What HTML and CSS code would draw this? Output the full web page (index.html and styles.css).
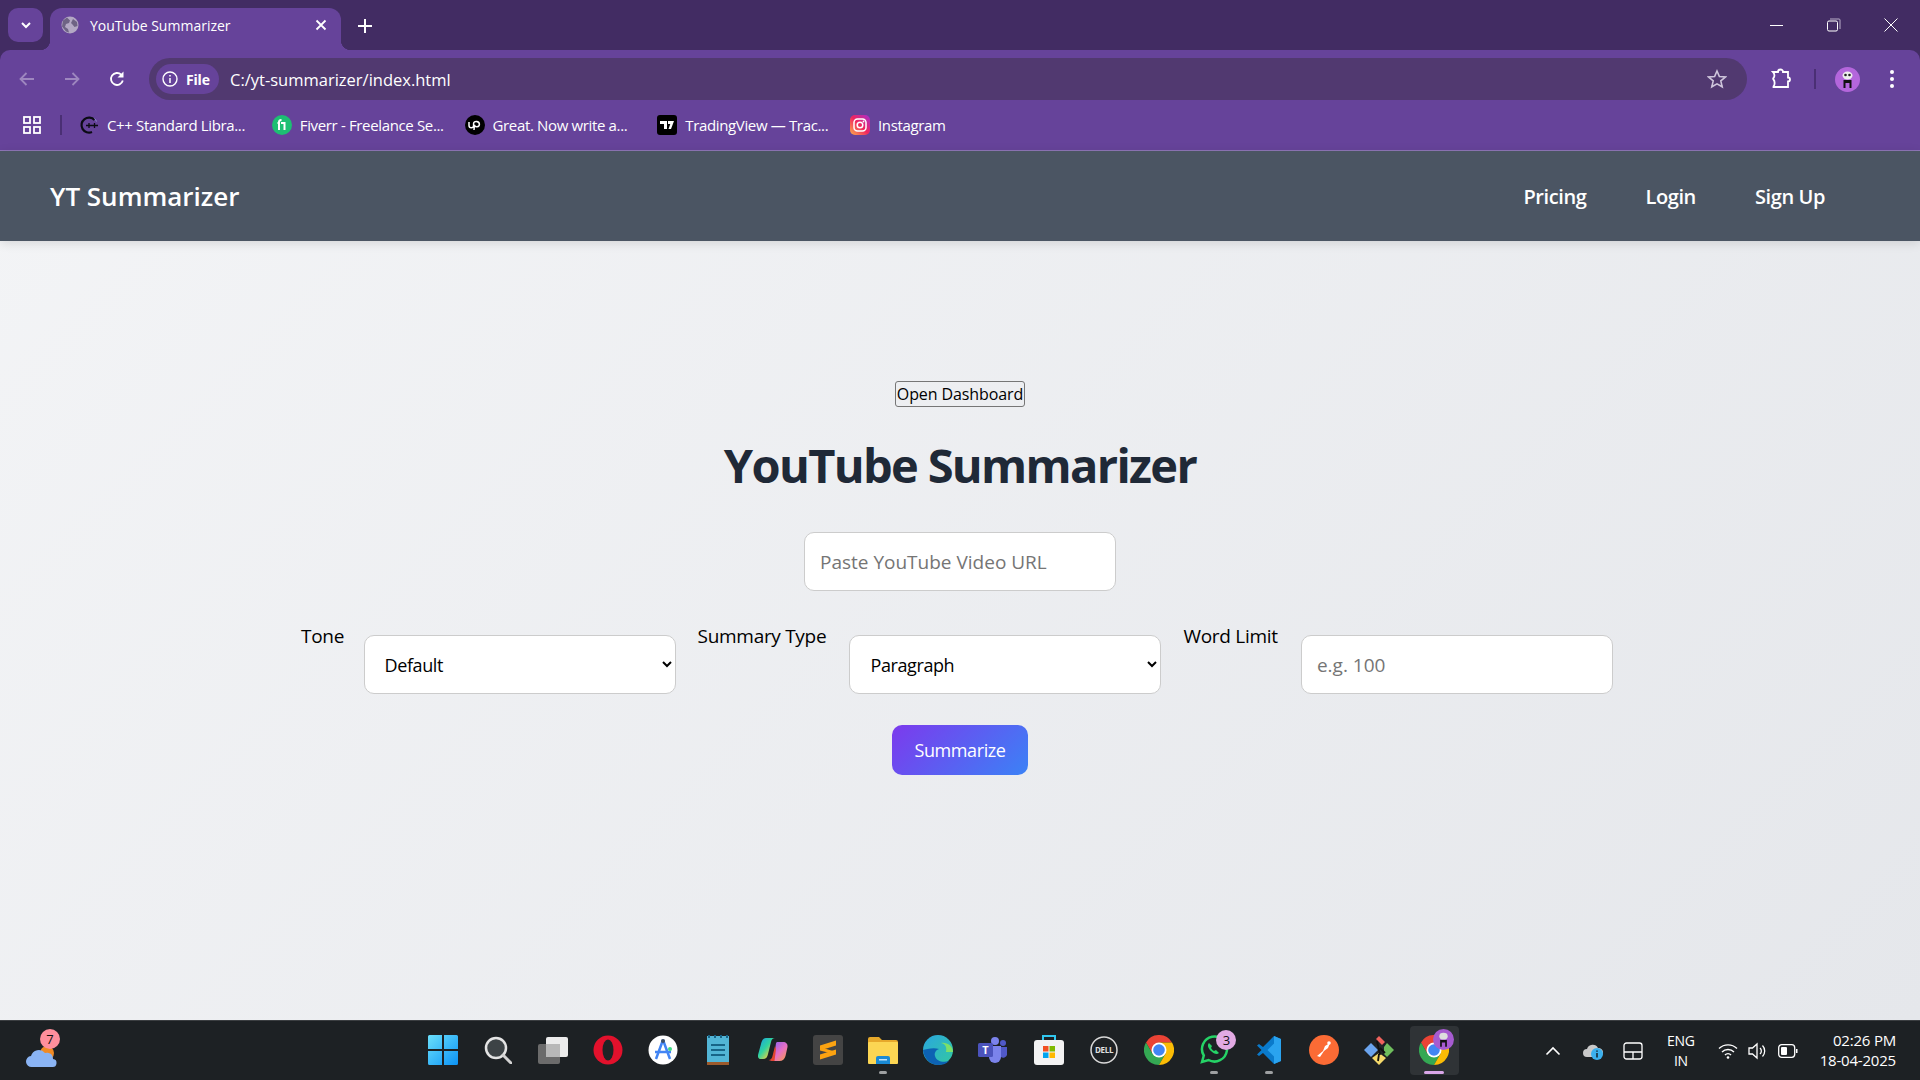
FILE: index.html
```html
<!DOCTYPE html>
<html lang="en">
<head>
<meta charset="utf-8">
<title>YouTube Summarizer</title>
<link rel="stylesheet" href="styles.css">
</head>
<body>
<div class="screen">
  <header class="chrome">
    <div class="tabstrip">
      <button class="tab-search"><svg width="14" height="14" viewBox="0 0 14 14"><path d="M3 5l4 4 4-4" fill="none" stroke="#fff" stroke-width="2"/></svg></button>
      <div class="tab">
        <svg class="favicon" width="18" height="18" viewBox="0 0 18 18"><circle cx="9" cy="9" r="8.500" fill="#b3a8c4"/><path d="M6 1.500l3 3-1 2.500-3 1-1 3 3 2 1 3.500-3-1-4-5 1-6zM12 3l4 3 .5 4-3 1-2-2.500-1.500-1.500z" fill="#6e6384"/></svg>
        <span class="tab-title">YouTube Summarizer</span>
        <svg class="tab-close" width="12" height="12" viewBox="0 0 12 12"><path d="M1.500 1.500l9 9M10.500 1.500l-9 9" stroke="#fff" stroke-width="1.800"/></svg>
      </div>
      <svg class="new-tab" width="14" height="14" viewBox="0 0 14 14"><path d="M7 0v14M0 7h14" stroke="#fff" stroke-width="2"/></svg>
      <div class="win-controls">
        <svg width="14" height="14" viewBox="0 0 14 14"><path d="M0 7.500h13" stroke="#fff"/></svg>
        <svg width="14" height="14" viewBox="0 0 14 14"><rect x=".5" y="3" width="10" height="10" rx="1.500" fill="none" stroke="#fff"/><path d="M3 1h9a1 1 0 0 1 1 1v9" fill="none" stroke="#b9aec9"/></svg>
        <svg width="14" height="14" viewBox="0 0 14 14"><path d="M.5.5l13 13M13.500.5l-13 13" stroke="#fff"/></svg>
      </div>
    </div>
    <div class="toolbar">
      <svg class="nav-icon" width="18" height="18" viewBox="0 0 18 18"><path d="M16 9H2.500M8.500 3l-6 6 6 6" fill="none" stroke="#9e87bf" stroke-width="1.800"/></svg>
      <svg class="nav-icon" width="18" height="18" viewBox="0 0 18 18"><path d="M2 9h13.500M9.500 3l6 6-6 6" fill="none" stroke="#9e87bf" stroke-width="1.800"/></svg>
      <svg class="nav-icon" width="18" height="18" viewBox="0 0 18 18"><path d="M14.800 10.500A6 6 0 1 1 13.200 4.700" fill="none" stroke="#fff" stroke-width="1.800"/><path d="M15.500 1.500v6h-6z" fill="#fff"/></svg>
      <div class="omnibox">
        <div class="chip">
          <svg width="16" height="16" viewBox="0 0 16 16"><circle cx="8" cy="8" r="7" fill="none" stroke="#fff" stroke-width="1.400"/><path d="M8 7v5M8 4v1.600" stroke="#fff" stroke-width="1.500"/></svg>
          <span class="chip-label">File</span>
        </div>
        <span class="url">C:/yt-summarizer/index.html</span>
        <svg class="star" width="20" height="20" viewBox="0 0 20 20"><path d="M10 2l2.400 5.500 6 .5-4.600 3.900 1.400 5.900L10 14.800 4.800 17.800l1.400-5.900L1.600 8l6-.5z" fill="none" stroke="#cfc6dc" stroke-width="1.600"/></svg>
      </div>
      <svg class="ext" width="22" height="22" viewBox="0 0 22 22"><path d="M3 4h5a2.500 2.500 0 0 1 5 0h5v5.500a2 2 0 0 1 0 4V19H3.500v-.5c1.500-1.500 1.500-5.500 0-7-.5-.5-.5-1 0-1.500C5 8.500 4.500 5.500 3 4z" fill="none" stroke="#fff" stroke-width="1.800"/></svg>
      <span class="tool-sep"></span>
      <span class="avatar"><svg width="25" height="25" viewBox="0 0 25 25"><circle cx="12.500" cy="12.500" r="12.500" fill="#b466dc"/><ellipse cx="12.500" cy="8.500" rx="5" ry="4" fill="#eee"/><circle cx="10.500" cy="8" r="1.300" fill="#222"/><circle cx="14.500" cy="8" r="1.300" fill="#222"/><path d="M8.500 13h8v8h-2v-5h-4v5h-2z" fill="#111"/></svg></span>
      <svg class="kebab" width="6" height="20" viewBox="0 0 6 20"><circle cx="3" cy="3" r="2" fill="#fff"/><circle cx="3" cy="10" r="2" fill="#fff"/><circle cx="3" cy="17" r="2" fill="#fff"/></svg>
    </div>
    <div class="bookmarks">
      <svg class="apps" width="18" height="18" viewBox="0 0 18 18"><g fill="none" stroke="#fff" stroke-width="1.800"><rect x="1" y="1" width="6" height="6"/><rect x="11" y="1" width="6" height="6"/><rect x="1" y="11" width="6" height="6"/><rect x="11" y="11" width="6" height="6"/></g></svg>
      <span class="bm-sep"></span>
      <a class="bm bm-first"><svg width="20" height="20" viewBox="0 0 20 20"><path d="M15.500 5A7.500 7.500 0 1 0 13 17" fill="none" stroke="#0b0b14" stroke-width="2.200"/><path d="M15.500 3.500a8 8 0 0 1 2 3" fill="none" stroke="#8f8fd0" stroke-width="1"/><path d="M7 10.500h12M10 8v5M15.500 8v5" stroke="#0b0b14" stroke-width="1.300"/></svg><span>C++ Standard Libra...</span></a>
      <a class="bm"><svg width="20" height="20" viewBox="0 0 20 20"><circle cx="10" cy="10" r="10" fill="#1dbf73"/><path d="M7 15V8H5.500M7 8V7c0-1.500 1-2 2.500-2M12.500 15V8H9" fill="none" stroke="#fff" stroke-width="2"/></svg><span>Fiverr - Freelance Se...</span></a>
      <a class="bm"><svg width="20" height="20" viewBox="0 0 20 20"><circle cx="10" cy="10" r="10" fill="#000"/><path d="M4 7v3.500a2.300 2.300 0 0 0 4.600 0V8.500c0-3 5.800-2.500 5.800.8 0 3-4.500 3.500-5 .7L9 15" fill="none" stroke="#fff" stroke-width="1.500"/></svg><span>Great. Now write a...</span></a>
      <a class="bm"><svg width="20" height="20" viewBox="0 0 20 20"><rect width="20" height="20" rx="3" fill="#000"/><path d="M3 6h7v8H7V9H3zM11 6h6l-3 8h-2.500l1.800-5H11z" fill="#fff"/></svg><span>TradingView — Trac...</span></a>
      <a class="bm"><svg width="20" height="20" viewBox="0 0 20 20"><defs><linearGradient id="igGrad" x1="0" y1="1" x2="1" y2="0"><stop offset="0" stop-color="#fdb04b"/><stop offset=".5" stop-color="#f0265f"/><stop offset="1" stop-color="#a32fd1"/></linearGradient></defs><rect width="20" height="20" rx="5" fill="url(#igGrad)"/><rect x="4" y="4" width="12" height="12" rx="3.500" fill="none" stroke="#fff" stroke-width="1.500"/><circle cx="10" cy="10" r="2.800" fill="none" stroke="#fff" stroke-width="1.500"/><circle cx="13.500" cy="6.500" r=".9" fill="#fff"/></svg><span>Instagram</span></a>
    </div>
  </header>

  <div class="page">
    <nav class="navbar">
      <div class="brand">YT Summarizer</div>
      <div class="nav-links"><a>Pricing</a><a>Login</a><a>Sign Up</a></div>
    </nav>
    <main class="main">
      <button class="dash-btn">Open Dashboard</button>
      <h1 class="title">YouTube Summarizer</h1>
      <input class="field text-field url-field" type="text" placeholder="Paste YouTube Video URL">
      <div class="options">
        <label class="opt-label label-tone">Tone</label>
        <select class="field"><option>Default</option></select>
        <label class="opt-label label-type">Summary Type</label>
        <select class="field"><option>Paragraph</option></select>
        <label class="opt-label label-limit">Word Limit</label>
        <input class="field text-field" type="text" placeholder="e.g. 100">
      </div>
      <button class="submit">Summarize</button>
    </main>
  </div>

  <footer class="taskbar">
    <div class="widget">
      <svg width="34" height="24" viewBox="0 0 34 24"><circle cx="22" cy="8" r="7" fill="#f08a24"/><path d="M7 22a5.500 5.500 0 0 1-1-11 8 8 0 0 1 14-3 6 6 0 0 1 8 6 4 4 0 0 1-1 8z" fill="#8ab4f4"/></svg>
      <span class="tb-badge badge-weather">7</span>
    </div>
    <div class="tb-icons">
      <div class="tb-item"><svg width="30" height="30" viewBox="0 0 30 30"><defs><linearGradient id="winGrad" x1="0" y1="0" x2="1" y2="1"><stop offset="0" stop-color="#6be0fb"/><stop offset="1" stop-color="#0c93f5"/></linearGradient></defs><path d="M0 1.500A1.500 1.500 0 0 1 1.500 0H14v14H0zM16 0h12.500A1.500 1.500 0 0 1 30 1.500V14H16zM0 16h14v14H1.500A1.500 1.500 0 0 1 0 28.500zM16 16h14v12.500a1.500 1.500 0 0 1-1.500 1.500H16z" fill="url(#winGrad)"/></svg></div>
      <div class="tb-item"><svg width="28" height="28" viewBox="0 0 28 28"><circle cx="12" cy="12" r="10" fill="#3d4346" stroke="#e4e4e4" stroke-width="2.500"/><path d="M19 19l8 8" stroke="#d2d2d2" stroke-width="3" stroke-linecap="round"/></svg></div>
      <div class="tb-item"><svg width="30" height="28" viewBox="0 0 30 28"><rect x="8" y="1" width="22" height="20" rx="2" fill="#ececec"/><rect x="0" y="8" width="22" height="20" rx="2" fill="#6b6b6b"/><rect x="8" y="8" width="14" height="13" fill="#b8b8b8"/></svg></div>
      <div class="tb-item"><svg width="30" height="30" viewBox="0 0 30 30"><circle cx="15" cy="15" r="14.500" fill="#e3112c"/><ellipse cx="15" cy="15" rx="5.500" ry="10.500" fill="#1f2426"/></svg></div>
      <div class="tb-item"><svg width="30" height="30" viewBox="0 0 30 30"><circle cx="15" cy="15" r="14.500" fill="#fff"/><path d="M15 5L8 24M15 5l7 19M7 17h16" fill="none" stroke="#4285f4" stroke-width="2.500"/><circle cx="15" cy="6" r="2" fill="#3d4f66"/><circle cx="22" cy="14" r="2" fill="#3ddc84"/></svg></div>
      <div class="tb-item"><svg width="22" height="30" viewBox="0 0 22 30"><rect y="1" width="22" height="29" fill="#52b5d6"/><rect y="27" width="22" height="3" fill="#9c5a2c"/><path d="M4 10h14M4 15h14M4 20h14" stroke="#186487" stroke-width="2"/><path d="M2 0v3M8 0v3M14 0v3M20 0v3" stroke="#186487" stroke-width="2"/></svg></div>
      <div class="tb-item"><svg width="30" height="26" viewBox="0 0 30 26"><defs><linearGradient id="copA" x1="0" y1="0" x2="1" y2="1"><stop offset="0" stop-color="#1a9fe8"/><stop offset=".45" stop-color="#2fd3a0"/><stop offset=".8" stop-color="#f4d03f"/><stop offset="1" stop-color="#f06a3c"/></linearGradient><linearGradient id="copB" x1="0" y1="0" x2="1" y2="1"><stop offset="0" stop-color="#7a5cf6"/><stop offset=".55" stop-color="#e86fc5"/><stop offset="1" stop-color="#f9a03f"/></linearGradient></defs><path d="M8 1h9c-2 0-3.500 1.500-4 4l-3 12c-.5 3-2 5-5 5H3c-2.500 0-3.500-2-3-4l3-11C4 3 5.500 1 8 1z" fill="url(#copA)"/><path d="M19 5h6c3 0 5 2 4.500 5l-2 9c-.8 3-3 5-6 5h-10c2.500 0 3.500-2 4-4l2-10c.3-2.500.5-5 1.500-5z" fill="url(#copB)"/><path d="M17 9l-2.500 10c-.4 2-1.500 4-4 4 2 1 6 1 6 1l1.500-12z" fill="#e2452f"/></svg></div>
      <div class="tb-item"><svg width="30" height="30" viewBox="0 0 30 30"><rect width="30" height="30" rx="3" fill="#444"/><path d="M7 10.500L23 5.500v5L7 15.500zM7 19.500l16-5v5L7 24.500zM7 12l16 5-2 2L7 15.500zM23 18L9 13.500" fill="#fca311"/></svg></div>
      <div class="tb-item running"><svg width="30" height="28" viewBox="0 0 30 28"><path d="M0 3a2 2 0 0 1 2-2h9l3 3h14a2 2 0 0 1 2 2v20H0z" fill="#e7a92b"/><rect y="6" width="30" height="22" rx="1" fill="#fcd653"/><path d="M8 22a2 2 0 0 1 2-2h10a2 2 0 0 1 2 2v6H8z" fill="#1a8ad4"/><rect x="11" y="23" width="8" height="1.500" fill="#bfe2fa"/></svg></div>
      <div class="tb-item"><svg width="30" height="30" viewBox="0 0 30 30"><defs><linearGradient id="edgeA" x1="0" y1="0" x2="1" y2="1"><stop offset="0" stop-color="#2aa6e0"/><stop offset="1" stop-color="#33c9a0"/></linearGradient></defs><circle cx="15" cy="15" r="15" fill="url(#edgeA)"/><path d="M0 15C1 24 8 30 15 30c4 0 8-1 11-4-6 2-13 0-14-5-1-3 1-6 4-7-5-2-13 0-16 1z" fill="#0d62b3"/><path d="M30 17c0-6-6-10-12-9 5 1 6 5 5 9z" fill="#7ce06a"/></svg></div>
      <div class="tb-item"><svg width="30" height="28" viewBox="0 0 30 28"><circle cx="17" cy="5" r="4" fill="#7b83eb"/><circle cx="25" cy="7" r="3" fill="#5059c9"/><path d="M11 10h12v11a6 6 0 0 1-12 0z" fill="#7b83eb"/><path d="M23 11h6v8a4 4 0 0 1-6 2z" fill="#5059c9"/><rect y="7" width="15" height="14" rx="1.500" fill="#4b53bc"/><text class="teams-t" x="7.500" y="18" text-anchor="middle">T</text></svg></div>
      <div class="tb-item"><svg width="30" height="30" viewBox="0 0 30 30"><path d="M9 5V1h12v4" fill="none" stroke="#30c7ef" stroke-width="2"/><rect y="5" width="30" height="25" rx="3" fill="#f3f3f3"/><rect x="9" y="11" width="5.500" height="5.500" fill="#f25022"/><rect x="15.500" y="11" width="5.500" height="5.500" fill="#7fba00"/><rect x="9" y="17.500" width="5.500" height="5.500" fill="#00a4ef"/><rect x="15.500" y="17.500" width="5.500" height="5.500" fill="#ffb900"/></svg></div>
      <div class="tb-item"><svg width="28" height="28" viewBox="0 0 28 28"><circle cx="14" cy="14" r="13" fill="none" stroke="#d9d9d9" stroke-width="1.500"/><text class="dell-t" x="14" y="17" text-anchor="middle">DELL</text></svg></div>
      <div class="tb-item"><svg width="30" height="30" viewBox="0 0 30 30"><path d="M2 7.500A15 15 0 0 1 28 7.500H15L8.500 18.750z" fill="#ea4335"/><path d="M2 7.500A15 15 0 0 0 15 30L21.500 18.750H8.500z" fill="#34a853"/><path d="M28 7.500A15 15 0 0 1 15 30L21.500 18.750 15 7.500z" fill="#fbbc05"/><circle cx="15" cy="15" r="7.500" fill="#fff"/><circle cx="15" cy="15" r="5.800" fill="#4285f4"/></svg></div>
      <div class="tb-item running"><svg width="30" height="30" viewBox="0 0 30 30"><path d="M3 27l1.800-6.500A12.500 12.500 0 1 1 9.500 25z" fill="none" stroke="#25d366" stroke-width="2.500"/><path d="M10 8c-2 2-1 5 2 8s6 4 8 2l-3-3-2 1c-1-.5-2-1.500-3-3l1-2z" fill="#25d366"/></svg><span class="tb-badge badge-wa">3</span></div>
      <div class="tb-item running"><svg width="24" height="30" viewBox="0 0 24 30"><path d="M17 1l7 3v22l-7 3L6 18l-4 3-2-1.500L4.500 15 0 10.500 2 9l4 3z" fill="#0a7acb"/><path d="M17 1l7 3v22l-7 3zM17 8.500L10.500 15l6.500 6.500z" fill="#2aa3ef" fill-rule="evenodd"/></svg></div>
      <div class="tb-item"><svg width="30" height="30" viewBox="0 0 30 30"><circle cx="15" cy="15" r="15" fill="#fb6b35"/><path d="M8 21l6-5 2-5 5-3-2 5-4 3-4 6z" fill="#fff"/><circle cx="20" cy="8" r="1.800" fill="#fff"/></svg></div>
      <div class="tb-item"><svg width="30" height="30" viewBox="0 0 30 30"><path d="M9 13l6-6 7 7-6 7z" fill="#22272a"/><path d="M12 4l3-3 6 6-3 3z" fill="#f0635d"/><path d="M0 15l7-7 7 7-7 7z" fill="#6ba4ee"/><path d="M23 8l7 7-7 7-3-3v-7z" fill="#6fbe5d"/><path d="M15 18l7 5-7 7-7-7z" fill="#f5da6b"/><path d="M13 6l3 14M16 13l5 5M15 19l-1 7" stroke="#111" stroke-width="1.800"/></svg></div>
      <div class="tb-item active"><svg class="active-logo" width="30" height="30" viewBox="0 0 30 30"><path d="M2 7.500A15 15 0 0 1 28 7.500H15L8.500 18.750z" fill="#ea4335"/><path d="M2 7.500A15 15 0 0 0 15 30L21.500 18.750H8.500z" fill="#34a853"/><path d="M28 7.500A15 15 0 0 1 15 30L21.500 18.750 15 7.500z" fill="#fbbc05"/><circle cx="15" cy="15" r="7.500" fill="#fff"/><circle cx="15" cy="15" r="5.800" fill="#4285f4"/></svg><svg class="chrome-profile" width="21" height="21" viewBox="0 0 25 25"><circle cx="12.500" cy="12.500" r="12.500" fill="#a65bd0"/><ellipse cx="12.500" cy="8.500" rx="5" ry="4" fill="#ddd"/><path d="M8.500 13h8v8h-2v-5h-4v5h-2z" fill="#111"/></svg></div>
    </div>
    <div class="tray">
      <svg class="tray-caret" width="16" height="10" viewBox="0 0 16 10"><path d="M1.500 8.500L8 2l6.500 6.500" fill="none" stroke="#fff" stroke-width="1.600"/></svg>
      <svg class="tray-cloud" width="22" height="20" viewBox="0 0 22 20"><path d="M5 16a4 4 0 0 1 0-8 6 6 0 0 1 11-1 4 4 0 0 1 1 9z" fill="#c9c9c9"/><circle cx="15" cy="13" r="6" fill="#3bb0ee"/><path d="M15 12v4.500M15 9.500v1.200" stroke="#14212a" stroke-width="1.500"/></svg>
      <svg class="tray-pad" width="20" height="18" viewBox="0 0 20 18"><rect x="1" y="1" width="18" height="16" rx="2.500" fill="none" stroke="#fff" stroke-width="1.300"/><path d="M1 10h18M10 10v7" stroke="#fff" stroke-width="1.300"/></svg>
      <div class="lang"><span>ENG</span><span>IN</span></div>
      <div class="tray-status">
        <svg width="20" height="18" viewBox="0 0 20 18"><g fill="none" stroke="#fff" stroke-width="1.400"><path d="M1 6.500a13 13 0 0 1 18 0M4 10a8.500 8.500 0 0 1 12 0M7 13a4 4 0 0 1 6 0"/></g><circle cx="10" cy="15.500" r="1.300" fill="#fff"/></svg>
        <svg width="20" height="20" viewBox="0 0 20 20"><g fill="none" stroke="#fff" stroke-width="1.300"><path d="M1 7h3.500L9 3v14l-4.500-4H1z"/><path d="M12 7a4 4 0 0 1 0 6M14.500 4.500a8 8 0 0 1 0 11"/></g></svg>
        <svg width="20" height="14" viewBox="0 0 20 14"><rect x=".7" y=".7" width="16" height="12.600" rx="3" fill="none" stroke="#fff" stroke-width="1.300"/><rect x="3" y="3" width="6" height="8" rx="1" fill="#fff"/><rect x="18" y="5" width="1.500" height="4" fill="#fff"/></svg>
      </div>
      <div class="clock"><span>02:26 PM</span><span>18-04-2025</span></div>
    </div>
  </footer>
</div>
</body>
</html>
```

FILE: styles.css
```css
* { box-sizing: border-box; }
html, body { margin: 0; height: 100%; }
body { font-family: "Open Sans", "Noto Sans", sans-serif; overflow: hidden; }
svg { display: block; flex: none; }
.screen { width: 1920px; height: 1080px; display: flex; flex-direction: column; }

/* browser chrome */
.chrome { background: #422c63; color: #fff; flex: none; }
.tabstrip { height: 50px; display: flex; align-items: flex-start; padding: 8px 0 0 8px; }
.tab-search { width: 35px; height: 34px; border: 0; padding: 0; border-radius: 10px; background: #66439a; display: flex; align-items: center; justify-content: center; }
.tab { width: 291px; height: 42px; margin-left: 7px; background: #66439a; border-radius: 12px 12px 0 0; display: flex; align-items: center; padding: 0 14px 8px 11px; position: relative; }
.tab::before, .tab::after { content: ""; position: absolute; bottom: 0; width: 10px; height: 10px; }
.tab::before { left: -10px; background: radial-gradient(circle at 0 0, transparent 10px, #66439a 10.500px); }
.tab::after { right: -10px; background: radial-gradient(circle at 100% 0, transparent 10px, #66439a 10.500px); }
.favicon { margin-right: 11px; }
.tab-title { font-size: 14px; letter-spacing: 0; flex: 1; white-space: nowrap; }
.new-tab { margin: 11px 0 0 17px; }
.win-controls { margin-left: auto; display: flex; gap: 43px; padding: 10px 22px 0 0; }
.toolbar { height: 50px; background: #66439a; border-radius: 10px 10px 0 0; display: flex; align-items: center; padding: 8px 18px 0 18px; }
.nav-icon { margin-right: 27px; }
.nav-icon:nth-child(3) { margin-right: 23px; }
.omnibox { width: 1598px; height: 42px; border-radius: 21px; background: #513970; display: flex; align-items: center; padding: 0 20px 0 7px; }
.chip { width: 63px; height: 30px; background: #66439a; border-radius: 15px; display: flex; align-items: center; gap: 8px; padding-left: 6px; }
.chip-label { font-size: 14px; font-weight: 700; letter-spacing: -.2px; }
.url { font-size: 16.500px; margin-left: 11px; flex: 1; white-space: nowrap; }
.ext { margin-left: 23px; }
.tool-sep { width: 2px; height: 20px; background: #4a2f74; margin-left: 22px; }
.avatar { margin-left: 19px; }
.kebab { margin-left: 29px; }
.bookmarks { height: 51px; background: #66439a; border-bottom: 1px solid #8f76b8; display: flex; align-items: center; padding: 0 0 1px 23px; }
.apps { margin-right: 19px; }
.bm-sep { width: 2px; height: 20px; background: #4a2f74; margin-right: 17px; }
.bm { width: 192.750px; display: flex; align-items: center; gap: 8px; font-size: 15px; letter-spacing: -.35px; white-space: nowrap; }

/* page */
.page { flex: 1; display: flex; flex-direction: column; background: linear-gradient(135deg, #f3f4f6, #e5e7eb); min-height: 0; }
.navbar { height: 90px; background: #4b5563; color: #fff; display: flex; align-items: center; justify-content: space-between; padding: 0 95px 0 50px; box-shadow: 0 2px 10px rgba(0,0,0,.12); flex: none; }
.brand { font-size: 26px; font-weight: 600; }
.nav-links { display: flex; gap: 59px; font-size: 20px; font-weight: 600; letter-spacing: -.4px; padding-top: 1px; }
.main { flex: 1; display: flex; flex-direction: column; align-items: center; padding-top: 140px; }
.dash-btn { width: 130px; height: 26px; padding: 0; background: transparent; border: 1px solid #767676; border-radius: 3px; font: 16px "Open Sans", sans-serif; letter-spacing: -.1px; color: #000; white-space: nowrap; }
.title { margin: 24px 0 0; height: 68px; line-height: 68px; font-size: 47px; font-weight: 700; color: #1f2937; letter-spacing: -1.670px; white-space: nowrap; }
.field { height: 59px; width: 312px; background: #fff; border: 1px solid #ccc; border-radius: 10px; font: 18px "Open Sans", sans-serif; letter-spacing: -.4px; color: #000; padding: 0 16px; }
.text-field { font-size: 19px; letter-spacing: 0; padding: 0 15px; }
.field::placeholder { color: #757575; }
.url-field { margin-top: 33px; }
.options { margin: 44px 6px 0 0; display: flex; align-items: flex-start; gap: 22px; }
.opt-label { font-size: 19px; letter-spacing: -.3px; line-height: 25px; margin-top: -11px; white-space: nowrap; }
.label-tone { margin-right: -2.500px; }
.label-type { margin-right: 1.200px; }
.label-limit { margin-right: 1.300px; }
.submit { margin-top: 31px; width: 136px; height: 50px; border: 0; border-radius: 10px; background: linear-gradient(135deg, #7c3aed, #3b82f6); color: #fff; font: 18px "Open Sans", sans-serif; letter-spacing: -.4px; }

/* taskbar */
.taskbar { height: 60px; flex: none; background: #1d2124; border-top: 1px solid #3b3e41; display: flex; align-items: center; color: #fff; }
.widget { width: 415px; height: 100%; display: flex; align-items: center; padding: 12px 0 0 25px; position: relative; }
.tb-badge { position: absolute; width: 20px; height: 20px; border-radius: 50%; font-size: 13px; line-height: 20px; text-align: center; color: #111; }
.badge-weather { left: 40px; top: 8px; background: #ff8f9c; }
.badge-wa { right: 5px; top: 9px; background: #e2aae3; }
.tb-icons { display: flex; height: 100%; }
.tb-item { width: 55.100px; height: 100%; display: flex; align-items: center; justify-content: center; position: relative; padding-bottom: 2px; }
.tb-item.running::after { content: ""; position: absolute; bottom: 6px; left: 50%; width: 8px; height: 3px; margin-left: -4px; border-radius: 2px; background: #9ea0a2; }
.tb-item.active::before { content: ""; position: absolute; inset: 5px 3px; background: #2f3336; border-radius: 4px; }
.active-logo { position: relative; }
.tb-item.active::after { content: ""; position: absolute; bottom: 6px; left: 50%; width: 20px; height: 3px; margin-left: -10px; border-radius: 2px; background: #d9a6e8; }
.chrome-profile { position: absolute; right: 8px; top: 8px; }
.teams-t { font: 700 11px "Open Sans", sans-serif; fill: #fff; }
.dell-t { font: 700 8px "Open Sans", sans-serif; fill: #e0e0e0; letter-spacing: -.3px; }
.tray { margin-left: auto; display: flex; align-items: center; padding-right: 24px; }
.tray-caret { margin-right: 21px; }
.tray-cloud { margin-right: 19px; }
.tray-pad { margin-right: 24px; }
.lang { display: flex; flex-direction: column; align-items: center; font-size: 14px; line-height: 20px; letter-spacing: -.3px; margin-right: 23px; }
.tray-status { display: flex; align-items: center; gap: 10px; margin-right: 22px; }
.clock { display: flex; flex-direction: column; align-items: flex-end; font-size: 15px; line-height: 20px; letter-spacing: -.2px; padding-bottom: 2px; }
```
